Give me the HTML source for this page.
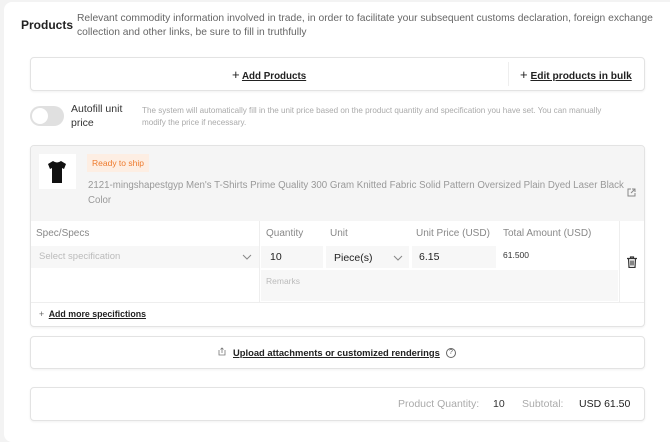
<!DOCTYPE html>
<html><head><meta charset="utf-8"><style>
*{box-sizing:border-box;margin:0;padding:0}
body{width:670px;height:435px;background:#f3f3f3;font-family:"Liberation Sans",Arial,sans-serif;position:relative;overflow:hidden;color:#222}
.a{position:absolute}
.card{left:4px;top:2px;width:680px;height:440px;background:#fff;border-radius:8px}
.box{border:1px solid #e3e3e3;border-radius:4px;background:#fff;box-shadow:0 1px 2px rgba(0,0,0,.06)}
u{text-decoration:underline}
.h{font-size:10px;color:#888}
.in{background:#f7f7f7}
</style></head><body>
<div class="a card"></div>
<div class="a" style="left:21px;top:18px;font-size:12px;font-weight:bold">Products</div>
<div class="a" style="left:77px;top:12px;font-size:10.3px;line-height:14px;color:#666;width:580px">Relevant commodity information involved in trade, in order to facilitate your subsequent customs declaration, foreign exchange collection and other links, be sure to fill in truthfully</div>

<div class="a box" style="left:30px;top:57px;width:615px;height:34px"></div>
<div class="a" style="left:508px;top:62px;width:1px;height:24px;background:#eee"></div>
<div class="a" style="left:232px;top:67px;font-size:9.8px;font-weight:bold;color:#222"><span style="font-weight:normal;font-size:13px">+</span> <u>Add Products</u></div>
<div class="a" style="left:520px;top:67px;font-size:10.2px;font-weight:bold;color:#222"><span style="font-weight:normal;font-size:13px">+</span> <u>Edit products in bulk</u></div>

<div class="a" style="left:30px;top:106px;width:34px;height:20px;border-radius:10px;background:#e0e0e0"></div>
<div class="a" style="left:32px;top:108px;width:16px;height:16px;border-radius:50%;background:#fff"></div>
<div class="a" style="left:71px;top:102px;font-size:10.5px;line-height:14px;color:#333;width:60px">Autofill unit price</div>
<div class="a" style="left:142px;top:105px;font-size:8.1px;line-height:12px;color:#aaa;width:478px">The system will automatically fill in the unit price based on the product quantity and specification you have set. You can manually modify the price if necessary.</div>

<div class="a box" style="left:30px;top:145px;width:615px;height:182px;overflow:hidden">
 <div class="a" style="left:0;top:0;width:615px;height:75px;background:#f5f5f5"></div>
</div>
<div class="a" style="left:39px;top:154px;width:37px;height:35px;background:#fff"></div>
<svg class="a" style="left:47px;top:160px" width="20" height="24" viewBox="0 0 20 24"><path d="M6 1 L1 4 L3 9 L5 8 L5 23 L15 23 L15 8 L17 9 L19 4 L14 1 Q10 4 6 1Z" fill="#111"/></svg>
<div class="a" style="left:87px;top:154px;width:62px;height:18px;background:#fdeee3;color:#ee7a2c;font-size:8.5px;line-height:18px;text-align:center">Ready to ship</div>
<div class="a" style="left:88px;top:178px;font-size:9.7px;line-height:15px;color:#999;width:540px">2121-mingshapestgyp Men's T-Shirts Prime Quality 300 Gram Knitted Fabric Solid Pattern Oversized Plain Dyed Laser Black Color</div>
<svg class="a" style="left:627px;top:188px" width="9" height="9" viewBox="0 0 9 9"><path d="M4 1H1V8H8V5M5 1H8V4M8 1L4 5" fill="none" stroke="#888" stroke-width="1"/></svg>

<div class="a" style="left:259px;top:221px;width:1px;height:81px;background:#eee"></div>
<div class="a" style="left:619px;top:221px;width:1px;height:81px;background:#eee"></div>
<div class="a" style="left:31px;top:302px;width:613px;height:1px;background:#eee"></div>
<div class="a h" style="left:36px;top:228px">Spec/Specs</div>
<div class="a h" style="left:266px;top:228px">Quantity</div>
<div class="a h" style="left:330px;top:228px">Unit</div>
<div class="a h" style="left:416px;top:228px">Unit Price (USD)</div>
<div class="a h" style="left:503px;top:228px">Total Amount (USD)</div>
<div class="a in" style="left:31px;top:246px;width:228px;height:22px"></div>
<div class="a" style="left:39px;top:251px;font-size:9.5px;color:#bbb">Select specification</div>
<svg class="a" style="left:242px;top:254px" width="10" height="6"><path d="M1 1L5 5L9 1" fill="none" stroke="#888"/></svg>
<div class="a in" style="left:261px;top:246px;width:62px;height:22px"></div>
<div class="a in" style="left:326px;top:246px;width:83px;height:22px"></div>
<div class="a in" style="left:412px;top:246px;width:84px;height:22px"></div>
<div class="a in" style="left:261px;top:270px;width:357px;height:31px"></div>
<div class="a" style="left:270px;top:251px;font-size:10.5px">10</div>
<div class="a" style="left:334px;top:252px;font-size:10.5px">Piece(s)</div>
<svg class="a" style="left:393px;top:255px" width="10" height="6"><path d="M1 1L5 5L9 1" fill="none" stroke="#888"/></svg>
<div class="a" style="left:419px;top:251px;font-size:10.5px">6.15</div>
<div class="a" style="left:503px;top:250px;font-size:8.5px;color:#333">61.500</div>
<div class="a" style="left:266px;top:276px;font-size:8.5px;color:#bbb">Remarks</div>
<svg class="a" style="left:627px;top:256px" width="10" height="12" viewBox="0 0 10 12"><path d="M0 2.5H10M3.5 2.5V1H6.5V2.5M1.5 2.5L2 11.5H8L8.5 2.5M4 4.5V9.5M6 4.5V9.5" fill="none" stroke="#333" stroke-width="1.2"/></svg>
<div class="a" style="left:39px;top:309px;font-size:8.8px;font-weight:bold"><span style="font-weight:normal;color:#666">+</span>&nbsp; <u>Add more specifictions</u></div>

<div class="a box" style="left:30px;top:336px;width:615px;height:33px"></div>
<svg class="a" style="left:218px;top:347px" width="8" height="9" viewBox="0 0 8 9"><path d="M1 3V8H7V3M4 6V1M2.5 2.5L4 1L5.5 2.5" fill="none" stroke="#777" stroke-width=".8"/></svg>
<div class="a" style="left:233px;top:347px;font-size:9.4px;font-weight:bold"><u>Upload attachments or customized renderings</u></div>
<div class="a" style="left:446px;top:348px;width:10px;height:10px;border:1px solid #666;border-radius:50%;font-size:7px;line-height:8px;text-align:center;color:#555">?</div>

<div class="a box" style="left:30px;top:387px;width:615px;height:34px"></div>
<div class="a" style="left:398px;top:398px;font-size:10.5px;color:#aaa">Product Quantity:</div>
<div class="a" style="left:493px;top:398px;font-size:10.5px;color:#333">10</div>
<div class="a" style="left:522px;top:398px;font-size:10.5px;color:#aaa">Subtotal:</div>
<div class="a" style="left:579px;top:398px;font-size:10.5px;color:#222">USD 61.50</div>
</body></html>
